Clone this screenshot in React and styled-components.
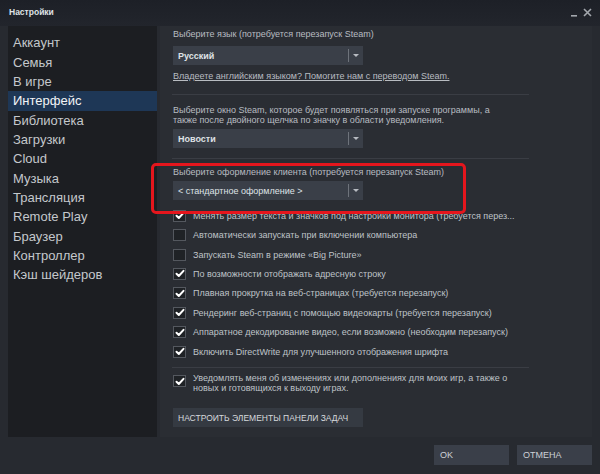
import React from "react";
import styled, { createGlobalStyle } from "styled-components";

const GlobalStyle = createGlobalStyle`
  html, body {
    margin: 0;
    padding: 0;
    background: #25282e;
  }
  * {
    box-sizing: border-box;
  }
`;

const Window = styled.div`
  width: 600px;
  height: 474px;
  display: flex;
  flex-direction: column;
  background: #272a30;
  font-family: "Liberation Sans", Arial, sans-serif;
  overflow: hidden;
`;

const TitleBar = styled.div`
  height: 26px;
  display: flex;
  align-items: flex-start;
  justify-content: space-between;
  padding: 7px 8px 0 9px;
  background: linear-gradient(180deg, #1d2027 0%, #22252c 100%);
`;

const Title = styled.div`
  font-size: 8.5px;
  font-weight: 700;
  color: #dfe2e6;
  line-height: 10px;
`;

const WinButtons = styled.div`
  display: flex;
  align-items: flex-start;
  gap: 5px;
  margin-top: 1px;
`;

const Body = styled.div`
  height: 411px;
  display: flex;
  gap: 3px;
  padding: 0 8px;
`;

const Sidebar = styled.nav`
  width: 149px;
  flex-shrink: 0;
  background: #1c1e22;
  padding-top: 7.3px;
`;

const NavItem = styled.div`
  height: 19.33px;
  line-height: 19.33px;
  padding-left: 5px;
  font-size: 13px;
  color: ${(p) => (p.$active ? "#f2f4f6" : "#c4c8cc")};
  background: ${(p) => (p.$active ? "#1e3756" : "transparent")};
  white-space: nowrap;
`;

const Content = styled.div`
  flex: 1;
  background: #2a2d33;
  padding: 2px 0 0 13px;
  display: flex;
  flex-direction: column;
  align-items: flex-start;
`;

const Label = styled.div`
  font-size: 9px;
  line-height: ${(p) => (p.$multi ? "10px" : "12px")};
  color: #b8bcc1;
  margin-top: ${(p) => p.$mt || 0}px;
  white-space: nowrap;
`;

const DropdownBox = styled.div`
  width: 190px;
  height: 19px;
  margin-top: ${(p) => p.$mt || 0}px;
  background: #3a3f48;
  display: flex;
  align-items: center;
  padding-left: 5px;
`;

const DropdownText = styled.span`
  flex: 1;
  font-size: 9px;
  font-weight: ${(p) => (p.$bold ? 700 : 400)};
  color: #dfe2e6;
  white-space: nowrap;
`;

const DropdownDivider = styled.span`
  width: 1px;
  height: 13px;
  background: #6e737b;
`;

const DropdownArrow = styled.span`
  width: 14px;
  display: flex;
  justify-content: center;
  align-items: center;
  &::before {
    content: "";
    border-left: 3px solid transparent;
    border-right: 3px solid transparent;
    border-top: 3px solid #b7bbc1;
  }
`;

const Link = styled.a`
  font-size: 9px;
  line-height: 12px;
  color: #b8bcc1;
  text-decoration: underline;
  margin-top: 5px;
  cursor: pointer;
`;

const Divider = styled.div`
  width: 357px;
  height: 1px;
  margin-left: -1px;
  background: #3a3d44;
  margin-top: ${(p) => p.$mt || 0}px;
`;

const Highlight = styled.div`
  position: relative;
  margin-top: ${(p) => p.$mt || 0}px;
  &::after {
    content: "";
    position: absolute;
    top: -3px;
    left: -22px;
    width: 309px;
    height: 45px;
    border: 3px solid #e5161d;
    border-radius: 5px;
    pointer-events: none;
  }
`;

const CheckList = styled.div`
  margin-top: ${(p) => p.$mt || 0}px;
  display: flex;
  flex-direction: column;
`;

const CheckRow = styled.label`
  display: flex;
  align-items: ${(p) => (p.$multi ? "flex-start" : "center")};
  min-height: 19.43px;
  gap: 7px;
`;

const Box = styled.span`
  width: 13px;
  height: 12px;
  flex-shrink: 0;
  border: 1px solid #54585f;
  background: #1f2226;
  display: flex;
  align-items: center;
  justify-content: center;
  margin-top: ${(p) => (p.$multi ? "2px" : 0)};
`;

const CheckText = styled.span`
  font-size: 9px;
  line-height: 10px;
  color: #bfc3c8;
  white-space: nowrap;
`;

const WideButton = styled.button`
  width: 190px;
  height: 19px;
  margin-top: ${(p) => p.$mt || 0}px;
  border: none;
  background: #353a42;
  color: #d6d9dd;
  font-family: inherit;
  font-size: 8.5px;
  text-align: left;
  padding: 0 5px;
  white-space: nowrap;
`;

const Footer = styled.div`
  height: 37px;
  display: flex;
  justify-content: flex-end;
  gap: 8px;
  padding: 8px 8px 0 0;
`;

const FooterButton = styled.button`
  width: 75px;
  height: 20px;
  border: none;
  background: #3a3f49;
  color: #cdd1d6;
  font-family: inherit;
  font-size: 9px;
  text-align: left;
  padding: 0 6px;
`;

const Check = () => (
  <svg width="10" height="9" viewBox="0 0 10 9">
    <polyline
      points="1.5,4.8 3.8,7 8.5,1.8"
      fill="none"
      stroke="#ffffff"
      strokeWidth="2"
      strokeLinecap="round"
      strokeLinejoin="round"
    />
  </svg>
);

const Dropdown = ({ children, bold, mt }) => (
  <DropdownBox $mt={mt}>
    <DropdownText $bold={bold}>{children}</DropdownText>
    <DropdownDivider />
    <DropdownArrow />
  </DropdownBox>
);

const Option = ({ checked, multi, children }) => (
  <CheckRow $multi={multi}>
    <Box $multi={multi}>{checked && <Check />}</Box>
    <CheckText>{children}</CheckText>
  </CheckRow>
);

const navItems = [
  "Аккаунт",
  "Семья",
  "В игре",
  "Интерфейс",
  "Библиотека",
  "Загрузки",
  "Cloud",
  "Музыка",
  "Трансляция",
  "Remote Play",
  "Браузер",
  "Контроллер",
  "Кэш шейдеров",
];

const options = [
  [true, "Менять размер текста и значков под настройки монитора (требуется перез..."],
  [false, "Автоматически запускать при включении компьютера"],
  [false, "Запускать Steam в режиме «Big Picture»"],
  [true, "По возможности отображать адресную строку"],
  [true, "Плавная прокрутка на веб-страницах (требуется перезапуск)"],
  [true, "Рендеринг веб-страниц с помощью видеокарты (требуется перезапуск)"],
  [true, "Аппаратное декодирование видео, если возможно (необходим перезапуск)"],
  [true, "Включить DirectWrite для улучшенного отображения шрифта"],
];

export default function App() {
  return (
    <>
      <GlobalStyle />
      <Window>
        <TitleBar>
          <Title>Настройки</Title>
          <WinButtons>
            <svg width="8" height="10" viewBox="0 0 8 10">
              <rect x="1" y="7" width="6" height="1.6" fill="#a3a7ad" />
            </svg>
            <svg width="9" height="9" viewBox="0 0 9 9">
              <path d="M1 1 L8 8 M8 1 L1 8" stroke="#a3a7ad" strokeWidth="1.6" />
            </svg>
          </WinButtons>
        </TitleBar>

        <Body>
          <Sidebar>
            {navItems.map((item) => (
              <NavItem key={item} $active={item === "Интерфейс"}>
                {item}
              </NavItem>
            ))}
          </Sidebar>

          <Content>
            <Label>Выберите язык (потребуется перезапуск Steam)</Label>
            <Dropdown bold mt={6}>
              Русский
            </Dropdown>
            <Link>Владеете английским языком? Помогите нам с переводом Steam.</Link>

            <Divider $mt={12} />

            <Label $multi $mt={10}>
              Выберите окно Steam, которое будет появляться при запуске программы, а
              <br />
              также после двойного щелчка по значку в области уведомления.
            </Label>
            <Dropdown bold mt={4}>
              Новости
            </Dropdown>

            <Divider $mt={10} />

            <Highlight $mt={7}>
              <Label>Выберите оформление клиента (потребуется перезапуск Steam)</Label>
              <Dropdown mt={3}>&lt; стандартное оформление &gt;</Dropdown>
            </Highlight>

            <CheckList $mt={6}>
              {options.map(([checked, text]) => (
                <Option key={text} checked={checked}>
                  {text}
                </Option>
              ))}
            </CheckList>

            <Divider $mt={6} />

            <CheckList $mt={5}>
              <Option checked multi>
                Уведомлять меня об изменениях или дополнениях для моих игр, а также о
                <br />
                новых и готовящихся к выходу играх.
              </Option>
            </CheckList>

            <WideButton $mt={15}>НАСТРОИТЬ ЭЛЕМЕНТЫ ПАНЕЛИ ЗАДАЧ</WideButton>
          </Content>
        </Body>

        <Footer>
          <FooterButton>OK</FooterButton>
          <FooterButton>ОТМЕНА</FooterButton>
        </Footer>
      </Window>
    </>
  );
}
